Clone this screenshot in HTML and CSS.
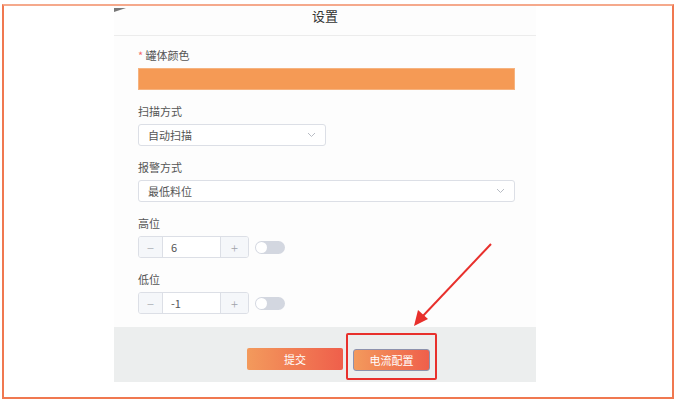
FILE: index.html
```html
<!DOCTYPE html>
<html lang="zh">
<head>
<meta charset="utf-8">
<link rel="stylesheet" href="styles.css">
</head>
<body>
<div class="frame">
  <div class="dialog">
    <svg class="corner" width="12" height="5" viewBox="0 0 12 5"><polygon points="0,0 12,0 0,4" fill="#777"/></svg>
    <div class="header">设置</div>
    <div class="body">
      <div class="item">
        <div class="label"><span class="req">*</span> 罐体颜色</div>
        <div class="colorbar"></div>
      </div>
      <div class="item">
        <div class="label">扫描方式</div>
        <div class="select short"><span>自动扫描</span>
          <svg width="9" height="6" viewBox="0 0 9 6"><path d="M1 1 L4.5 4.5 L8 1" fill="none" stroke="#b8bcc4" stroke-width="1"/></svg>
        </div>
      </div>
      <div class="item">
        <div class="label">报警方式</div>
        <div class="select"><span>最低料位</span>
          <svg width="9" height="6" viewBox="0 0 9 6"><path d="M1 1 L4.5 4.5 L8 1" fill="none" stroke="#b8bcc4" stroke-width="1"/></svg>
        </div>
      </div>
      <div class="item">
        <div class="label">高位</div>
        <div class="row">
          <div class="number">
            <div class="btn minus">−</div>
            <div class="val">6</div>
            <div class="btn plus">+</div>
          </div>
          <div class="switch"><div class="knob"></div></div>
        </div>
      </div>
      <div class="item">
        <div class="label">低位</div>
        <div class="row">
          <div class="number">
            <div class="btn minus">−</div>
            <div class="val">-1</div>
            <div class="btn plus">+</div>
          </div>
          <div class="switch"><div class="knob"></div></div>
        </div>
      </div>
    </div>
    <div class="footer">
      <button class="submit">提交</button>
      <button class="config">电流配置</button>
    </div>
  </div>
</div>
<div class="highlight"></div>
<svg class="arrow" width="676" height="402" viewBox="0 0 676 402">
  <line x1="491" y1="244" x2="421" y2="318" stroke="#e8302c" stroke-width="2"/>
  <polygon points="414,326 418,310 428,319" fill="#e8302c"/>
</svg>
</body>
</html>
```
FILE: styles.css
```css
* { box-sizing: border-box; }
html, body { margin: 0; padding: 0; background: #fff; }
body {
  width: 676px;
  height: 402px;
  position: relative;
  font-family: "Noto Sans CJK SC", "Noto Sans", sans-serif;
  color: #606266;
  overflow: hidden;
}
.frame {
  margin: 4px 0 0 2px;
  width: 672px;
  height: 395px;
  border: 2px solid #f07850;
  border-top-color: #f5a98c;
  padding-left: 110px;
}
.dialog {
  position: relative;
  width: 422px;
  height: 376px;
  background: #fdfdfd;
}
.corner { position: absolute; left: 0; top: 2px; }
.header {
  height: 30px;
  line-height: 20px;
  text-align: center;
  font-size: 13px;
  color: #333;
  border-bottom: 1px solid #ececec;
}
.body { padding: 11px 21px 0 24px; }
.item { margin-bottom: 13px; }
.label {
  height: 16px;
  line-height: 16px;
  font-size: 11px;
  margin-bottom: 5px;
  color: #555;
}
.req { color: #f56c6c; }
.colorbar { height: 22px; background: #f59a55; border: 1px solid #f6b37f; }
.select {
  height: 22px;
  border: 1px solid #dcdfe6;
  border-radius: 3px;
  background: #fff;
  display: flex;
  align-items: center;
  justify-content: space-between;
  padding: 0 9px 0 9px;
  font-size: 11px;
  color: #555;
}
.select.short { width: 188px; }
.row { display: flex; align-items: center; gap: 6px; }
.number {
  width: 111px;
  height: 22px;
  border: 1px solid #dcdfe6;
  border-radius: 3px;
  display: flex;
  background: #fff;
  overflow: hidden;
}
.btn {
  background: #f5f7fa;
  color: #a0a3a9;
  font-size: 13px;
  font-weight: 300;
  display: flex;
  align-items: center;
  justify-content: center;
}
.minus { width: 24px; border-right: 1px solid #dcdfe6; }
.plus { width: 28px; border-left: 1px solid #dcdfe6; }
.val { flex: 1; font-size: 11px; color: #555; padding-left: 8px; line-height: 20px; }
.switch {
  width: 30px;
  height: 13px;
  border-radius: 7px;
  background: #d3d7e0;
  position: relative;
}
.knob {
  position: absolute;
  left: 1px; top: 1px;
  width: 11px; height: 11px;
  border-radius: 50%;
  background: #fff;
}
.footer {
  position: absolute;
  left: 0; right: 0; bottom: 0;
  top: 321px;
  background: #eceeee;
  display: flex;
  align-items: flex-start;
  padding: 21px 0 0 133px;
  gap: 10px;
}
button {
  font-family: inherit;
  font-size: 11px;
  color: #fff;
  height: 22px;
  border: 0;
  border-radius: 2px;
  padding: 0;
  background: linear-gradient(90deg, #f39a5c, #ef5f4b);
}
.submit { width: 96px; }
.config { width: 77px; margin-top: 1px; border: 1px solid #8d92ad; border-radius: 3px; }
.highlight {
  position: absolute;
  left: 346px; top: 333px;
  width: 91px; height: 47px;
  border: 2px solid #e8302c;
  border-radius: 2px;
}
.arrow { position: absolute; left: 0; top: 0; pointer-events: none; }
```
